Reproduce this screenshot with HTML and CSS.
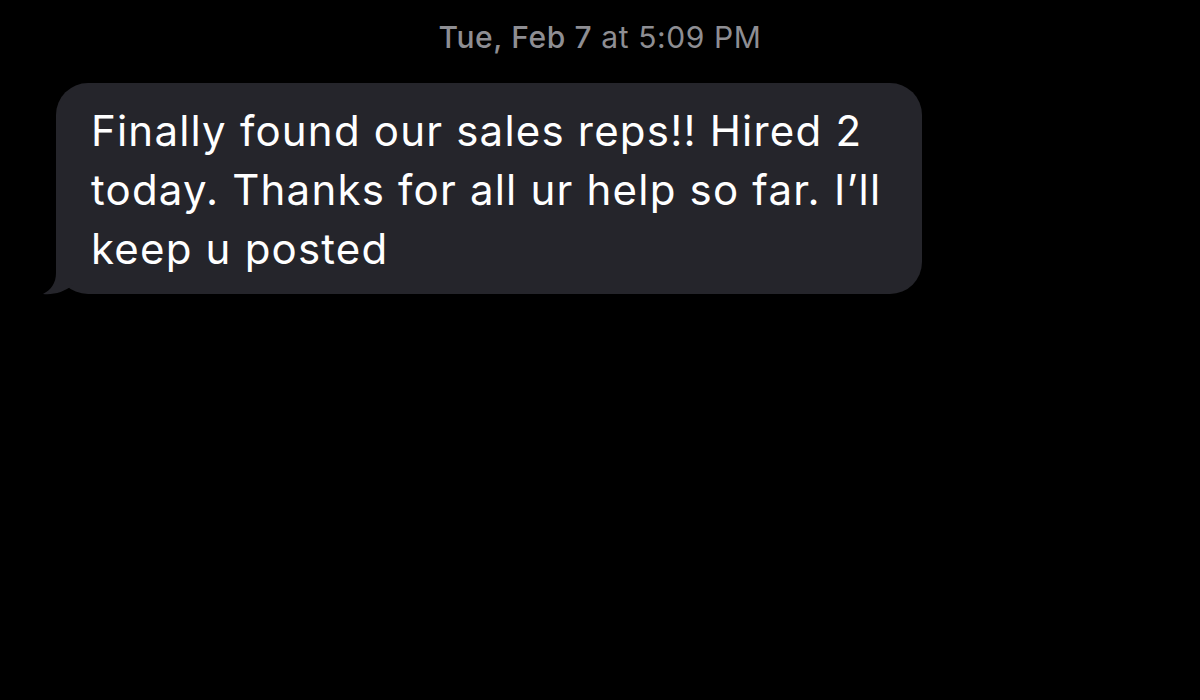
FILE: index.html
```html
<!DOCTYPE html>
<html lang="en">
<head>
<meta charset="utf-8">
<title>Messages</title>
<link rel="stylesheet" href="styles.css">
</head>
<body>
<main class="thread">
  <div class="timestamp"><span class="day">Tue, Feb 7</span> at 5:09 PM</div>
  <div class="row">
    <div class="bubble">
      <p class="text">Finally found our sales reps!! Hired 2<br>today. Thanks for all ur help so far. I’ll<br>keep u posted</p>
      <svg class="tail" width="40" height="40" viewBox="0 0 40 40" aria-hidden="true">
        <path d="M14 0 L14 18 C14 28 9 35 1 39 C12 40 22 37 31 30 L31 0 Z" fill="#25252b"/>
      </svg>
    </div>
  </div>
</main>
</body>
</html>
```

FILE: styles.css
```css
html, body {
  margin: 0;
  padding: 0;
  background: #000;
  height: 100%;
}
.thread {
  width: 1200px;
  height: 700px;
  background: #000;
  font-family: Inter, "Noto Sans", sans-serif;
  display: flex;
  flex-direction: column;
}
.timestamp {
  color: #8e8e93;
  font-size: 30px;
  letter-spacing: 0.6px;
  text-align: center;
  padding-top: 19px;
  line-height: 37px;
}
.timestamp .day {
  font-weight: 500;
}
.row {
  display: flex;
  padding-left: 56px;
  padding-top: 27px;
}
.bubble {
  position: relative;
  width: 866px;
  box-sizing: border-box;
  background: #25252b;
  border-radius: 32px;
  padding: 18px 20px 16px 35px;
}
.text {
  margin: 0;
  color: #fff;
  font-size: 42px;
  line-height: 59px;
  white-space: nowrap;
  letter-spacing: 1.2px;
}
.tail {
  position: absolute;
  left: -14px;
  bottom: -1px;
}
```
